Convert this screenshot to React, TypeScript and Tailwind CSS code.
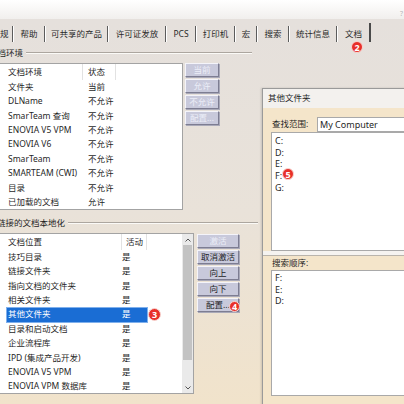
import React from "react";

const tabs = [
  { label: "常规", cls: "w-[26px] -ml-[12px]" },
  { label: "帮助", cls: "w-[32px]" },
  { label: "可共享的产品", cls: "w-[63px]" },
  { label: "许可证发放", cls: "w-[58px]" },
  { label: "PCS", cls: "w-[30px]" },
  { label: "打印机", cls: "w-[39px]" },
  { label: "宏", cls: "w-[22px]" },
  { label: "搜索", cls: "w-[32px]" },
  { label: "统计信息", cls: "w-[48px]" },
  { label: "文档", cls: "w-[33px]", active: true },
];

const envRows: [string, string][] = [
  ["文件夹", "当前"],
  ["DLName", "不允许"],
  ["SmarTeam 查询", "不允许"],
  ["ENOVIA V5 VPM", "不允许"],
  ["ENOVIA V6", "不允许"],
  ["SmarTeam", "不允许"],
  ["SMARTEAM (CWI)", "不允许"],
  ["目录", "不允许"],
  ["已加载的文档", "允许"],
];

const locRows: [string, string, boolean][] = [
  ["技巧目录", "是", false],
  ["链接文件夹", "是", false],
  ["指向文档的文件夹", "是", false],
  ["相关文件夹", "是", false],
  ["其他文件夹", "是", true],
  ["目录和启动文档", "是", false],
  ["企业流程库", "是", false],
  ["IPD (集成产品开发)", "是", false],
  ["ENOVIA V5 VPM", "是", false],
  ["ENOVIA VPM 数据库", "是", false],
];

function Btn({ label, disabled, w }: { label: string; disabled?: boolean; w: string }) {
  return (
    <div
      className={`${w} h-[14px] flex items-center justify-center bg-[#c8c9db] border border-t-[#f4f4fa] border-l-[#f4f4fa] border-r-[#7d7d92] border-b-[#7d7d92] shadow-[1px_1px_0_#a9a9b8] ${
        disabled ? "text-[#eceef8]" : "text-[#1e1e28]"
      }`}
    >
      {label}
    </div>
  );
}

function Badge({ n, cls }: { n: string; cls: string }) {
  return (
    <div
      className={`absolute ${cls} rounded-full bg-[#e8302a] text-white font-bold text-[9px] leading-none flex items-center justify-center border border-[#f7d6d2]`}
    >
      {n}
    </div>
  );
}

function GroupHeader({ label, cls, line }: { label: string; cls: string; line: string }) {
  return (
    <div className="h-[18px] flex items-center">
      <span className={`${cls} text-[#1e1e1e] whitespace-nowrap`}>{label}</span>
      <div className={`ml-[3px] ${line} h-0 border-t border-t-[#aca69f] border-b border-b-[#fbfaf7]`} />
    </div>
  );
}

export default function App() {
  return (
    <div className="relative w-[404px] h-[404px] overflow-hidden font-['Noto_Sans','Noto_Sans_CJK_SC',sans-serif] text-[8.5px] text-[#1f1f1f]">
      {/* top white strip */}
      <div className="h-[19px] bg-linear-to-b from-white to-[#f1efed] flex justify-end items-end pr-[1px]">
        <span className="text-[#b8b8b8] text-[7px] leading-none mb-[2px]">?</span>
      </div>

      <div className="h-[385px] bg-linear-to-b from-[#e5e0dc] via-[#e9e2d9] to-[#f1e3cb]">
        {/* tabs */}
        <div className="h-[25px] flex items-end pb-[2px] whitespace-nowrap">
          {tabs.map((t) => (
            <div key={t.label} className={`${t.cls} shrink-0 h-[16px] flex items-center`}>
              <div className="flex-1 text-center text-[#2a2a2a] leading-none">{t.label}</div>
              <div
                className={
                  t.active
                    ? "w-[2px] h-[19px] self-end bg-[#4a4a4a]"
                    : "w-[2px] h-[16px] bg-[#5c5c5c] border-r border-r-[#ffffff]"
                }
              />
            </div>
          ))}
        </div>

        {/* group 1 */}
        <GroupHeader label="文档环境" cls="-ml-[11px]" line="w-[226px]" />
        <div className="flex items-start">
          <div className="mt-[1px] w-[183px] h-[147px] bg-white border border-[#a3a3a3] border-l-0">
            <div className="h-[16px] flex items-center">
              <div className="w-[83px] h-full pl-[8px] flex items-center border-r border-r-[#e2e2e2]">文档环境</div>
              <div className="w-[33px] h-full pl-[5px] flex items-center border-r border-r-[#e2e2e2]">状态</div>
            </div>
            {envRows.map(([a, b]) => (
              <div key={a} className="h-[14.4px] flex items-center whitespace-nowrap">
                <div className="w-[88px] pl-[8px]">{a}</div>
                <div>{b}</div>
              </div>
            ))}
          </div>
          <div className="ml-[2px] mt-[1px] flex flex-col gap-[2px]">
            <Btn w="w-[34px]" label="当前" disabled />
            <Btn w="w-[34px]" label="允许" disabled />
            <Btn w="w-[34px]" label="不允许" disabled />
            <Btn w="w-[34px]" label="配置..." disabled />
          </div>
        </div>

        {/* group 2 */}
        <div className="h-[4px]" />
        <GroupHeader label="链接的文档本地化" cls="-ml-[3px]" line="w-[190px]" />
        <div className="flex items-start">
          <div className="mt-[1px] w-[194px] h-[161px] bg-white border border-[#a3a3a3] border-l-0 flex">
            <div className="flex-1">
              <div className="h-[16px] flex items-center">
                <div className="w-[122px] h-full pl-[8px] flex items-center border-r border-r-[#e2e2e2]">文档位置</div>
                <div className="w-[25px] h-full pl-[4px] flex items-center border-r border-r-[#e2e2e2]">活动</div>
              </div>
              {locRows.map(([a, b, sel]) => (
                <div key={a} className="h-[14.4px] flex items-center whitespace-nowrap">
                  <div
                    className={`ml-[7px] w-[140px] h-full flex items-center ${
                      sel ? "bg-[#1a6dd4] text-white outline outline-[#7fb0ec]" : ""
                    }`}
                  >
                    <div className="w-[115px] pl-[1px]">{a}</div>
                    <div>{b}</div>
                  </div>
                </div>
              ))}
            </div>
            <div className="w-[11px] h-full bg-[#eaeaea] flex flex-col items-center">
              <div className="h-[11px] flex items-center justify-center">
                <svg width="6" height="4" viewBox="0 0 6 4">
                  <path d="M0.5 3.5 L3 1 L5.5 3.5" fill="none" stroke="#555" strokeWidth="1" />
                </svg>
              </div>
              <div className="w-[9px] h-[115px] bg-[#c3c3c3]" />
              <div className="flex-1" />
              <div className="h-[11px] flex items-center justify-center">
                <svg width="6" height="4" viewBox="0 0 6 4">
                  <path d="M0.5 0.5 L3 3 L5.5 0.5" fill="none" stroke="#555" strokeWidth="1" />
                </svg>
              </div>
            </div>
          </div>
          <div className="ml-[3px] mt-[2px] flex flex-col gap-[2px]">
            <Btn w="w-[42px]" label="激活" disabled />
            <Btn w="w-[42px]" label="取消激活" />
            <Btn w="w-[42px]" label="向上" />
            <Btn w="w-[42px]" label="向下" />
            <Btn w="w-[42px]" label="配置..." />
          </div>
        </div>
      </div>

      {/* dialog window */}
      <div className="absolute left-[262px] top-[88px] w-[150px] h-[320px] border-l border-t border-[#9a9a9a] shadow-[-1px_0_2px_rgba(0,0,0,0.15)] bg-[#f4e5ca] flex flex-col">
        <div className="h-[19px] bg-[#f3f1ee] pl-[5px] flex items-center text-[#1e1e1e]">其他文件夹</div>
        <div className="pl-[8px] pt-[9px] flex flex-col">
          <div className="h-[15px] flex items-center">
            <div className="w-[46px] pl-[1px]">查找范围:</div>
            <div className="flex-1 h-full bg-white border border-[#a9a9a9] flex items-center pl-[2px] text-[9px]">My Computer</div>
          </div>
          <div className="h-[119px] bg-white border border-[#a9a9a9] pl-[3px] pt-[2px] text-[9px]">
            {["C:", "D:", "E:", "F:", "G:"].map((d) => (
              <div key={d} className="h-[11.7px] flex items-center">{d}</div>
            ))}
          </div>
          <div className="h-[5px] -ml-[8px] bg-[#f5f3f0] border-b border-b-[#b9b4ac]" />
          <div className="h-[14px] flex items-center pl-[1px]">搜索顺序:</div>
          <div className="h-[126px] bg-white border border-[#a9a9a9] pl-[3px] pt-[1px] text-[9px]">
            {["F:", "E:", "D:"].map((d) => (
              <div key={d} className="h-[11.6px] flex items-center">{d}</div>
            ))}
          </div>
        </div>
      </div>

      <Badge n="2" cls="left-[351px] top-[41px] w-[12px] h-[12px]" />
      <Badge n="3" cls="left-[148px] top-[308px] w-[13px] h-[13px]" />
      <Badge n="4" cls="left-[229px] top-[301px] w-[11px] h-[11px]" />
      <Badge n="5" cls="left-[282px] top-[168px] w-[12px] h-[12px]" />
    </div>
  );
}
